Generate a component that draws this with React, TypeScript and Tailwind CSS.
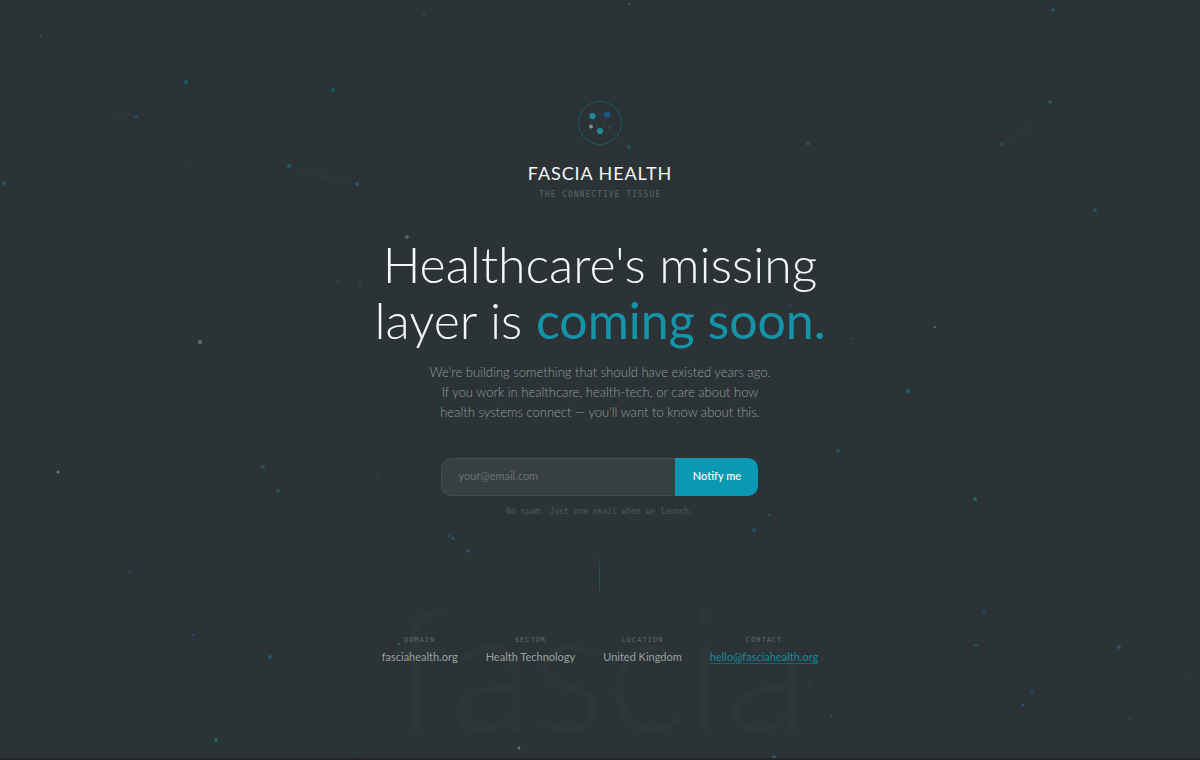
import { useState } from 'react';

interface Particle {
  x: number;
  y: number;
  r: number;
  color: string;
  opacity: number;
}

const TEAL = '#0e98b4';
const GREEN = '#1aa08c';
const BLUE = '#1f6fbf';
const GREY = '#c4cccc';

const particles: Particle[] = [
  { x: 41, y: 36, r: 1, color: GREEN, opacity: 0.4 },
  { x: 186, y: 82, r: 2, color: TEAL, opacity: 0.5 },
  { x: 333, y: 90, r: 2, color: TEAL, opacity: 0.5 },
  { x: 112, y: 112, r: 1, color: BLUE, opacity: 0.5 },
  { x: 136, y: 117, r: 2, color: BLUE, opacity: 0.5 },
  { x: 186, y: 167, r: 1, color: BLUE, opacity: 0.3 },
  { x: 289, y: 166, r: 2, color: TEAL, opacity: 0.5 },
  { x: 321, y: 176, r: 1, color: GREEN, opacity: 0.3 },
  { x: 357, y: 184, r: 2, color: BLUE, opacity: 0.6 },
  { x: 4, y: 183, r: 2, color: TEAL, opacity: 0.5 },
  { x: 424, y: 15, r: 1.5, color: BLUE, opacity: 0.4 },
  { x: 629, y: 4, r: 1, color: GREY, opacity: 0.4 },
  { x: 629, y: 147, r: 2, color: TEAL, opacity: 0.35 },
  { x: 407, y: 237, r: 2, color: GREY, opacity: 0.35 },
  { x: 337, y: 281, r: 1, color: BLUE, opacity: 0.4 },
  { x: 360, y: 285, r: 1.2, color: TEAL, opacity: 0.4 },
  { x: 200, y: 342, r: 2, color: GREY, opacity: 0.5 },
  { x: 1053, y: 10, r: 1.8, color: TEAL, opacity: 0.5 },
  { x: 1050, y: 102, r: 1.8, color: GREEN, opacity: 0.5 },
  { x: 1028, y: 128, r: 1.2, color: BLUE, opacity: 0.4 },
  { x: 1002, y: 144, r: 1.2, color: GREEN, opacity: 0.5 },
  { x: 808, y: 144, r: 1.4, color: GREEN, opacity: 0.5 },
  { x: 1095, y: 210, r: 2, color: BLUE, opacity: 0.5 },
  { x: 720, y: 306, r: 1.2, color: BLUE, opacity: 0.4 },
  { x: 790, y: 306, r: 1.2, color: BLUE, opacity: 0.4 },
  { x: 935, y: 327, r: 1.3, color: GREY, opacity: 0.35 },
  { x: 851, y: 339, r: 1, color: GREEN, opacity: 0.4 },
  { x: 908, y: 391, r: 2.2, color: TEAL, opacity: 0.5 },
  { x: 838, y: 451, r: 1.8, color: TEAL, opacity: 0.5 },
  { x: 58, y: 472, r: 1.6, color: GREY, opacity: 0.5 },
  { x: 263, y: 467, r: 2, color: BLUE, opacity: 0.5 },
  { x: 377, y: 475, r: 1.1, color: BLUE, opacity: 0.4 },
  { x: 278, y: 491, r: 1.5, color: GREEN, opacity: 0.5 },
  { x: 975, y: 499, r: 2, color: GREEN, opacity: 0.6 },
  { x: 769, y: 515, r: 1.3, color: TEAL, opacity: 0.4 },
  { x: 754, y: 530, r: 1.8, color: TEAL, opacity: 0.4 },
  { x: 449, y: 536, r: 1.3, color: TEAL, opacity: 0.4 },
  { x: 453, y: 538, r: 1.6, color: TEAL, opacity: 0.5 },
  { x: 468, y: 551, r: 1.8, color: TEAL, opacity: 0.5 },
  { x: 130, y: 572, r: 1.3, color: BLUE, opacity: 0.4 },
  { x: 984, y: 611, r: 1.8, color: BLUE, opacity: 0.5 },
  { x: 193, y: 635, r: 1.3, color: BLUE, opacity: 0.4 },
  { x: 399, y: 644, r: 1.3, color: GREEN, opacity: 0.5 },
  { x: 976, y: 645, r: 1.5, color: TEAL, opacity: 0.5 },
  { x: 1119, y: 647, r: 1.9, color: TEAL, opacity: 0.5 },
  { x: 270, y: 657, r: 1.9, color: TEAL, opacity: 0.5 },
  { x: 1188, y: 673, r: 0.8, color: GREEN, opacity: 0.3 },
  { x: 810, y: 683, r: 1, color: TEAL, opacity: 0.4 },
  { x: 1032, y: 693, r: 1.7, color: BLUE, opacity: 0.5 },
  { x: 1023, y: 705, r: 1.2, color: TEAL, opacity: 0.6 },
  { x: 831, y: 716, r: 1, color: GREEN, opacity: 0.4 },
  { x: 1130, y: 718, r: 1.1, color: TEAL, opacity: 0.4 },
  { x: 216, y: 740, r: 1.9, color: GREEN, opacity: 0.6 },
  { x: 519, y: 748, r: 1.4, color: GREY, opacity: 0.5 },
  { x: 355, y: 753, r: 1, color: GREEN, opacity: 0.3 },
  { x: 774, y: 757, r: 2, color: TEAL, opacity: 0.5 },
];

const links = [
  [289, 166, 321, 176],
  [321, 176, 357, 184],
  [112, 112, 136, 117],
  [1002, 144, 1028, 128],
];

const details = [
  { label: 'Domain', value: 'fasciahealth.org' },
  { label: 'Sector', value: 'Health Technology' },
  { label: 'Location', value: 'United Kingdom' },
  { label: 'Contact', value: 'hello@fasciahealth.org', href: 'mailto:hello@fasciahealth.org' },
];

function ParticleField() {
  return (
    <svg
      className="absolute inset-x-0 top-0 h-screen w-full"
      viewBox="0 0 1200 760"
      preserveAspectRatio="xMidYMid slice"
      aria-hidden="true"
    >
      {links.map(([x1, y1, x2, y2]) => (
        <line key={`${x1}-${y1}`} x1={x1} y1={y1} x2={x2} y2={y2} stroke={TEAL} strokeOpacity="0.08" />
      ))}
      {particles.map((p) => (
        <circle key={`${p.x}-${p.y}`} cx={p.x} cy={p.y} r={p.r} fill={p.color} fillOpacity={p.opacity * 0.85} />
      ))}
    </svg>
  );
}

function Logo() {
  return (
    <svg className="h-11 w-11" viewBox="0 0 44 44" fill="none" aria-hidden="true">
      <circle cx="22" cy="22" r="21.5" stroke="#1f5a60" />
      <g stroke="#0e98b4" strokeOpacity="0.3" strokeWidth="0.6">
        <path d="M14.5 15 29.5 13.5" />
        <path d="M14.5 15 22 30" />
        <path d="M14.5 15 13 25.5" />
        <path d="M29.5 13.5 22 30" />
      </g>
      <circle cx="14.5" cy="15" r="3.1" fill="#1f8a96" />
      <circle cx="29.5" cy="13.5" r="3.1" fill="#1d5585" />
      <circle cx="22" cy="30" r="3.1" fill="#1c8b98" />
      <circle cx="13" cy="25.5" r="1.9" fill="#858c8e" />
      <circle cx="31" cy="27" r="1.4" fill="#22486a" />
    </svg>
  );
}

export default function App() {
  const [email, setEmail] = useState('');

  return (
    <div className="relative flex min-h-screen flex-col items-center justify-center overflow-hidden border-b-2 border-[#22262a] bg-[#2b3336] pt-2 font-['Lato',sans-serif] text-[#f4f7f7]">
      <ParticleField />
      <div
        className="pointer-events-none absolute inset-x-0 bottom-0 text-center text-[172px] leading-[184px] font-light text-[#2e3639] select-none"
        aria-hidden="true"
      >
        fascia
      </div>

      <main className="relative flex flex-col items-center text-center">
        <Logo />
        <div className="mt-4 text-lg leading-6 tracking-wider uppercase">Fascia Health</div>
        <div className="mt-0.5 font-['DejaVu_Sans_Mono',monospace] text-[8px] leading-4 tracking-[1px] text-[#5c6466] uppercase">
          The Connective Tissue
        </div>

        <h1 className="mt-[33px] text-[50px] leading-14 font-light">
          Healthcare's missing
          <br />
          layer is <span className="font-normal text-[#1593a8]">coming soon.</span>
        </h1>
        <p className="mt-3.5 text-[13px] leading-5 font-light text-[#959c9f]">
          We're building something that should have existed years ago.
          <br />
          If you work in healthcare, health-tech, or care about how
          <br />
          health systems connect — you'll want to know about this.
        </p>

        <form className="mt-9 flex h-[38px] w-[317px]" onSubmit={(e) => e.preventDefault()}>
          <input
            type="email"
            aria-label="Email address"
            placeholder="your@email.com"
            value={email}
            onChange={(e) => setEmail(e.target.value)}
            className="min-w-0 flex-1 rounded-l-[10px] border border-r-0 border-[#434b4d] bg-[#373f41] px-4 text-[11px] outline-none placeholder:text-[#6a7173]"
          />
          <button type="submit" className="w-[83px] rounded-r-[10px] bg-[#0a98b3] text-[11px] font-medium text-white">
            Notify me
          </button>
        </form>
        <div className="mt-2 font-['DejaVu_Sans_Mono',monospace] text-[8px] leading-4 text-[#51595b]">
          No spam. Just one email when we launch.
        </div>

        <div className="mt-8 h-10 w-px bg-linear-to-b from-transparent via-[#1c5a5c] to-[#22494b]" />

        <dl className="mt-10 flex gap-7">
          {details.map((item) => (
            <div key={item.label}>
              <dt className="font-['DejaVu_Sans_Mono',monospace] text-[7px] leading-4 tracking-[1px] text-[#626a6c] uppercase">
                {item.label}
              </dt>
              <dd className="text-[11px] leading-[18px] text-[#9aa1a3]">
                {item.href ? (
                  <a href={item.href} className="border-b border-[#1d5f6b] text-[#168a9e]">
                    {item.value}
                  </a>
                ) : (
                  item.value
                )}
              </dd>
            </div>
          ))}
        </dl>
      </main>
    </div>
  );
}
